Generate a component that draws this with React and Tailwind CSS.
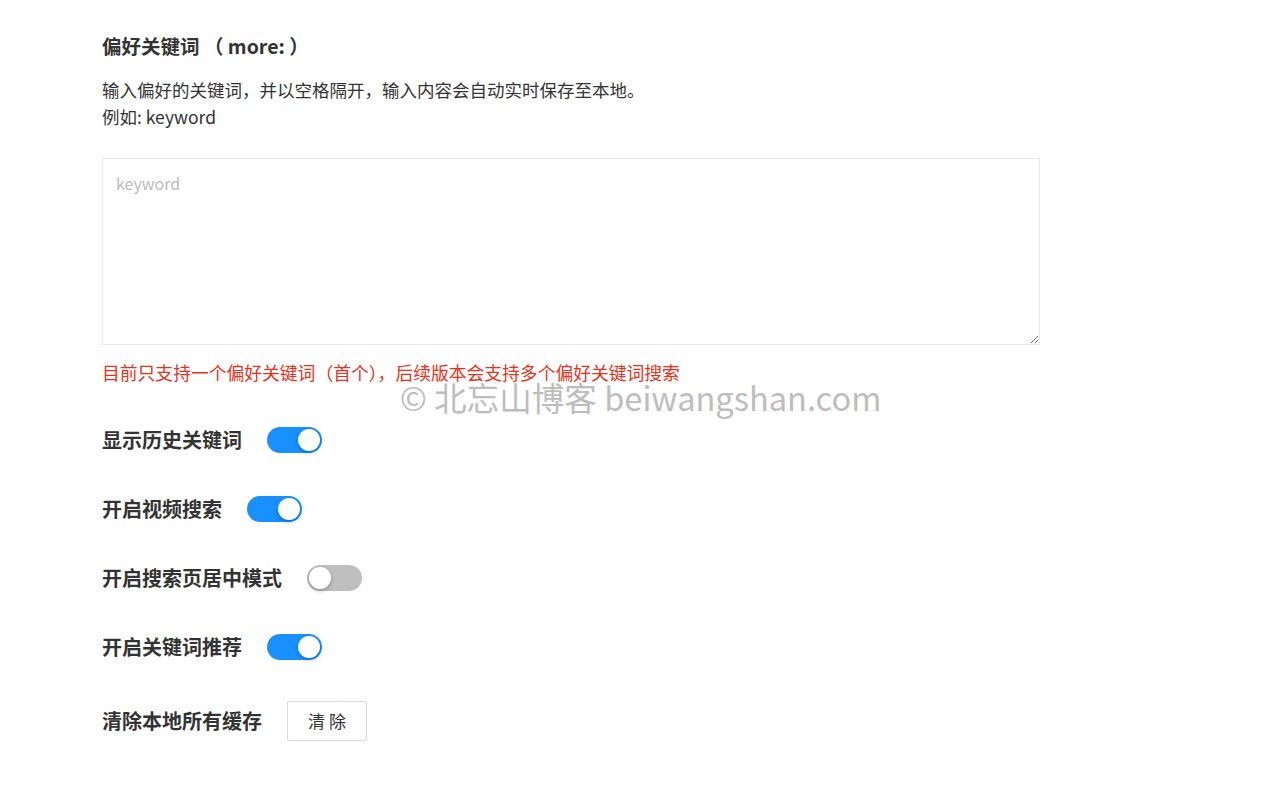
import React, { useState } from "react";

const font = { fontFamily: '"Noto Sans CJK SC", "Liberation Sans", sans-serif' };

function Toggle({ on, onClick }) {
  return (
    <button
      onClick={onClick}
      className={`relative h-[26px] w-[55px] rounded-full transition-colors ${on ? "bg-[#1890ff]" : "bg-[#bfbfbf]"}`}
    >
      <span
        className={`absolute top-[2px] h-[22px] w-[22px] rounded-full bg-white shadow-[0_2px_4px_rgba(0,0,0,0.25)] ${on ? "left-[31px]" : "left-[2px]"}`}
      />
    </button>
  );
}

function Row({ label, children }) {
  return (
    <div className="flex items-center gap-[25px]">
      <span className="text-[20px] font-bold leading-[26px] text-[#333]">{label}</span>
      {children}
    </div>
  );
}

export default function App() {
  const [t, setT] = useState([true, true, false, true]);
  const flip = (i) => setT((p) => p.map((v, j) => (j === i ? !v : v)));
  return (
    <div className="relative min-h-[791px] bg-white" style={font}>
      <div className="pl-[102px] pt-[33px] w-[1040px]">
        <h2 className="text-[19.5px] font-bold leading-[26px] text-[#333]">偏好关键词 （ more: ）</h2>
        <p className="mt-[17px] text-[17.5px] leading-[27px] text-[#333]">
          输入偏好的关键词，并以空格隔开，输入内容会自动实时保存至本地。
          <br />
          例如: keyword
        </p>
        <textarea
          placeholder="keyword"
          className="mt-[28px] block h-[187px] w-[938px] border border-[#e8e8e8] px-[13px] py-[12px] text-[16px] text-[#333] outline-none placeholder:text-[#bbb]"
        />
        <p className="mt-[16px] text-[17.8px] leading-[22px] text-[#e8311a]">
          目前只支持一个偏好关键词（首个），后续版本会支持多个偏好关键词搜索
        </p>
        <div className="mt-[44px] flex flex-col gap-[43px]">
          <Row label="显示历史关键词"><Toggle on={t[0]} onClick={() => flip(0)} /></Row>
          <Row label="开启视频搜索"><Toggle on={t[1]} onClick={() => flip(1)} /></Row>
          <Row label="开启搜索页居中模式"><Toggle on={t[2]} onClick={() => flip(2)} /></Row>
          <Row label="开启关键词推荐"><Toggle on={t[3]} onClick={() => flip(3)} /></Row>
        </div>
        <div className="mt-[41px]">
          <Row label="清除本地所有缓存">
            <button className="h-[40px] w-[80px] rounded-[2px] border border-[#d9d9d9] bg-white text-[17px] text-[#333]">清 除</button>
          </Row>
        </div>
      </div>
      <div className="pointer-events-none absolute left-0 right-0 top-[386px] text-center text-[32.6px] leading-[22px] text-[#bdbdbd]">
        © 北忘山博客 beiwangshan.com
      </div>
    </div>
  );
}
